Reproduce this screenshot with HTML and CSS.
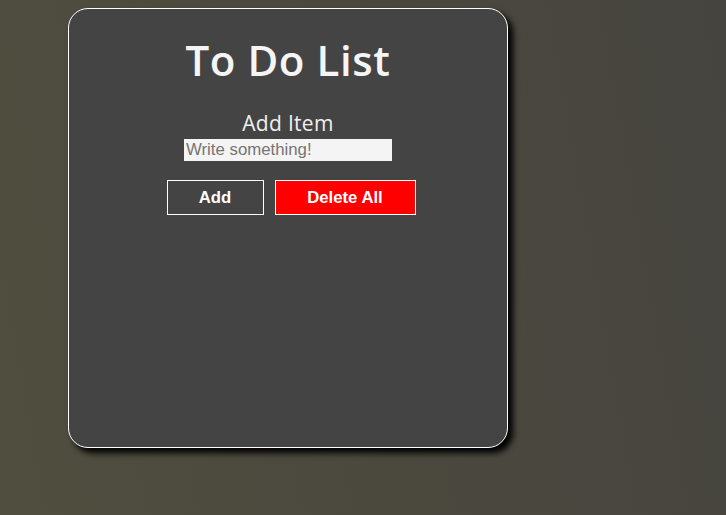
FILE: index.html
```html
<!DOCTYPE html>
<html>
<head>
<meta charset="utf-8">
<link rel="stylesheet" href="styles.css">
</head>
<body>
<div class="card">
  <h1 class="title">To Do List</h1>
  <div class="form">
    <label class="label" for="item">Add Item</label>
    <input class="input" id="item" type="text" placeholder="Write something!">
  </div>
  <div class="actions">
    <button class="btn btn-add">Add</button>
    <button class="btn btn-delete">Delete All</button>
  </div>
</div>
</body>
</html>
```

FILE: styles.css
```css
html, body {
  height: 100%;
}
body {
  margin: 0;
  padding: 8px 0 0 68px;
  box-sizing: border-box;
  background: linear-gradient(80deg, #504e3e 0%, #4b493e 50%, #46443f 100%);
  font-family: "Liberation Sans", Arial, sans-serif;
}
.card {
  width: 440px;
  height: 440px;
  box-sizing: border-box;
  background: #444444;
  border: 1px solid #ffffff;
  border-radius: 20px;
  box-shadow: 5px 5px 6px #000000;
  display: flex;
  flex-direction: column;
  align-items: center;
}
.title {
  margin: 27px 0 0 0;
  font-family: "Open Sans", sans-serif;
  font-weight: 600;
  font-size: 42px;
  line-height: 48px;
  color: #f5f5f5;
  letter-spacing: 0.6px;
}
.form {
  margin-top: 25px;
  display: flex;
  flex-direction: column;
  align-items: center;
  gap: 2px;
}
.label {
  font-family: "Open Sans", sans-serif;
  font-size: 21px;
  line-height: 28px;
  color: #f0f0f0;
  letter-spacing: 0.3px;
}
.input {
  width: 208px;
  height: 22px;
  box-sizing: border-box;
  border: none;
  padding: 0 2px;
  margin: 0;
  background: #f4f4f4;
  font-family: "Liberation Sans", Arial, sans-serif;
  font-size: 16.8px;
}
.input::placeholder {
  color: #757575;
}
.actions {
  margin-top: 19px;
  margin-left: 6px;
  display: flex;
  gap: 11px;
}
.btn {
  height: 35px;
  border: 1px solid #ffffff;
  font-family: "Liberation Sans", Arial, sans-serif;
  font-weight: bold;
  font-size: 16.7px;
  color: #ffffff;
  padding: 0;
}
.btn-add {
  width: 97px;
  background: transparent;
}
.btn-delete {
  width: 141px;
  background: #ff0000;
}
```
